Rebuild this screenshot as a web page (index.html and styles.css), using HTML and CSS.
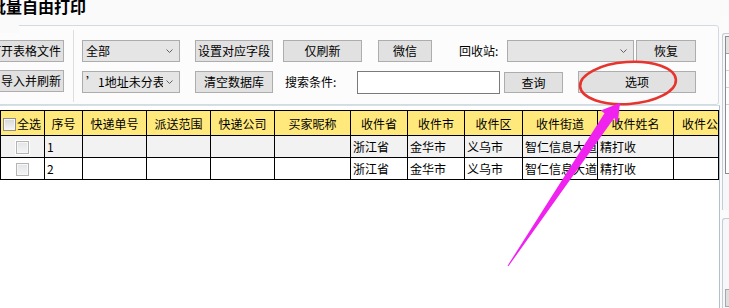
FILE: index.html
```html
<!DOCTYPE html>
<html lang="zh-CN">
  <head>
    <meta charset="UTF-8" />
    <title>批量自由打印</title>
    <link rel="stylesheet" href="styles.css">
  </head>
  <body>
    <div class="page">
      <div class="title">批量自由打印</div>
      <div class="body">
        <div class="main">
          <div class="group">
            <span class="caption">设置</span>
            <div class="left-col">
              <button class="btn btn-wide">打开表格文件</button>
              <button class="btn btn-wide">导入并刷新</button>
            </div>
            <div class="vsep"></div>
            <div class="rows">
              <div class="row">
                <div class="combo combo-main">
                  <span class="combo-text">全部</span>
                  <svg class="chev" width="7" height="4" viewBox="0 0 7 4"><polyline points="0.5,0.5 3.5,3.5 6.5,0.5" /></svg>
                </div>
                <button class="btn btn-field">设置对应字段</button>
                <button class="btn btn-refresh">仅刷新</button>
                <button class="btn btn-wx">微信</button>
                <span class="lbl lbl-bin">回收站:</span>
                <div class="combo combo-bin">
                  <span class="combo-text"></span>
                  <svg class="chev" width="7" height="4" viewBox="0 0 7 4"><polyline points="0.5,0.5 3.5,3.5 6.5,0.5" /></svg>
                </div>
                <button class="btn btn-restore">恢复</button>
              </div>
              <div class="row">
                <div class="combo combo-main">
                  <span class="combo-text">’1地址未分表’</span>
                  <svg class="chev" width="7" height="4" viewBox="0 0 7 4"><polyline points="0.5,0.5 3.5,3.5 6.5,0.5" /></svg>
                </div>
                <button class="btn btn-field">清空数据库</button>
                <span class="lbl lbl-search">搜索条件:</span>
                <input class="search" type="text" />
                <button class="btn btn-query">查询</button>
                <button class="btn btn-option">选项</button>
              </div>
            </div>
          </div>

          <div class="grid-wrap">
            <table class="grid">
              <colgroup>
                <col style="width: 44px" />
                <col style="width: 38px" />
                <col style="width: 64px" />
                <col style="width: 64px" />
                <col style="width: 64px" />
                <col style="width: 76px" />
                <col style="width: 57px" />
                <col style="width: 57px" />
                <col style="width: 58px" />
                <col style="width: 75px" />
                <col style="width: 76px" />
                <col style="width: 45px" />
              </colgroup>
              <thead>
                <tr>
                  <th class="th-all"><span class="cb"></span>全选</th>
                  <th>序号</th>
                  <th>快递单号</th>
                  <th>派送范围</th>
                  <th>快递公司</th>
                  <th>买家昵称</th>
                  <th>收件省</th>
                  <th>收件市</th>
                  <th>收件区</th>
                  <th>收件街道</th>
                  <th>收件姓名</th>
                  <th class="th-cut">收件公司</th>
                </tr>
              </thead>
              <tbody>
                <tr class="odd">
                  <td class="td-cb"><span class="cb cb-row"></span></td>
                  <td>1</td>
                  <td></td>
                  <td></td>
                  <td></td>
                  <td></td>
                  <td>浙江省</td>
                  <td>金华市</td>
                  <td>义乌市</td>
                  <td>智仁信息大道</td>
                  <td>精打收</td>
                  <td></td>
                </tr>
                <tr>
                  <td class="td-cb"><span class="cb cb-row"></span></td>
                  <td>2</td>
                  <td></td>
                  <td></td>
                  <td></td>
                  <td></td>
                  <td>浙江省</td>
                  <td>金华市</td>
                  <td>义乌市</td>
                  <td>智仁信息大道</td>
                  <td>精打收</td>
                  <td></td>
                </tr>
              </tbody>
            </table>
          </div>
        </div>

        <div class="side">
          <div class="panel panel-top">
            <div class="mini-grid">
              <div class="mini-head"></div>
              <div class="mini-row"></div>
              <div class="mini-row"></div>
              <div class="mini-row"></div>
            </div>
          </div>
          <div class="panel panel-bottom">
            <div class="mini-btn"></div>
          </div>
        </div>
      </div>

      <!-- annotation drawn over the screenshot -->
      <svg class="mark" width="729" height="308" viewBox="0 0 729 308">
        <ellipse cx="628" cy="83" rx="48" ry="21" transform="rotate(-4 628 83)" fill="none" stroke="#e8342f" stroke-width="2.6" />
        <polygon fill="#ef22ef" points="507.6,265.7 604.5,113.2 600.6,110.4 620,103 617.8,122.8 614.2,117.9 508.4,266.3" />
      </svg>
    </div>
  </body>
</html>
```

FILE: styles.css
```css
* {
  box-sizing: border-box;
}

body {
  margin: 0;
  font-family: "Noto Sans CJK SC", "Noto Sans", sans-serif;
  font-size: 12px;
  color: #000;
}

.page {
  position: relative;
  width: 729px;
  height: 308px;
  overflow: hidden;
  background: #fafafa;
  display: flex;
  flex-direction: column;
}

.title {
  height: 20px;
  margin-top: -4px;
  margin-left: -10px;
  font-size: 16px;
  font-weight: bold;
  line-height: 20px;
}

.body {
  flex: 1;
  display: flex;
}

.main {
  width: 720px;
  display: flex;
  flex-direction: column;
}

/* settings group */
.group {
  position: relative;
  margin-top: 9px;
  margin-left: -20px;
  width: 739px;
  height: 80px;
  border: 1px solid #d3dbe2;
  border-radius: 3px;
  background: #fcfcfc;
  display: flex;
  padding: 14px 0 0 5px;
}

.caption {
  position: absolute;
  left: -7px;
  top: -9px;
  padding-right: 21px;
  line-height: 16px;
  background: #fafafa;
}

.left-col {
  width: 78px;
  display: flex;
  flex-direction: column;
  gap: 8px;
}

.vsep {
  width: 1px;
  background: #dedede;
  margin: -10px 0 2px 9px;
}

.rows {
  margin-left: 8px;
  display: flex;
  flex-direction: column;
  gap: 9px;
}

.row {
  display: flex;
  align-items: center;
  height: 22px;
}

.btn {
  height: 22px;
  padding: 0;
  border: 1px solid #adadad;
  background: #e1e1e1;
  font-family: inherit;
  font-size: 12px;
  line-height: 20px;
  color: #000;
  white-space: nowrap;
  overflow: hidden;
}

.btn-wide {
  width: 78px;
  text-align: right;
  padding-right: 2px;
}

.btn-field {
  width: 78px;
  margin-left: 15px;
}

.btn-refresh {
  width: 79px;
  margin-left: 10px;
}

.btn-wx {
  width: 54px;
  margin-left: 16px;
}

.btn-restore {
  width: 60px;
  margin-left: 2px;
}

.btn-query {
  width: 59px;
  height: 21px;
  margin-left: 4px;
}

.btn-option {
  width: 118px;
  margin-left: 15px;
}

.combo {
  height: 22px;
  border: 1px solid #acacac;
  background: #e5e5e5;
  display: flex;
  align-items: center;
  padding-left: 3px;
  padding-right: 6px;
}

.combo-main {
  width: 98px;
}

.combo-bin {
  width: 127px;
  padding-right: 6px;
}

.combo-text {
  flex: 1;
  white-space: nowrap;
  overflow: hidden;
  line-height: 20px;
}

.chev {
  flex: none;
  margin-left: 3px;
}

.chev polyline {
  fill: none;
  stroke: #606060;
  stroke-width: 1;
}

.lbl {
  white-space: nowrap;
  line-height: 20px;
}

.lbl-bin {
  width: 48px;
  margin-left: 27px;
}

.lbl-search {
  width: 72px;
  margin-left: 12px;
}

.search {
  width: 143px;
  height: 23px;
  border: 1px solid #7a7a7a;
  background: #fff;
  padding: 0;
  margin: 0;
}

/* data grid */
.grid-wrap {
  flex: 1;
  border-top: 1px solid #d6dee7;
  border-right: 1px solid #b2c0ce;
  padding-top: 4px;
  background: #fff;
}

.grid {
  width: 718px;
  border-collapse: collapse;
  table-layout: fixed;
}

.grid th,
.grid td {
  border: 1px solid #000;
  padding: 0 2px;
  white-space: nowrap;
  overflow: hidden;
  font-weight: normal;
}

.grid th {
  height: 25px;
  background: #ffe97d;
  text-align: center;
}

.grid td {
  height: 22px;
  text-align: left;
}

.grid tr.odd td {
  background: #f2f2f2;
}

.grid th.th-all {
  padding: 0 0 0 2px;
  text-align: left;
}

.grid th.th-cut {
  text-align: left;
  padding-left: 8px;
}

.grid td.td-cb {
  text-align: center;
  padding: 0;
}

.cb {
  display: inline-block;
  width: 13px;
  height: 13px;
  border: 1px solid #8f8f8f;
  background: linear-gradient(#d6d6d6, #f6f6f6);
  box-shadow: inset 0 0 0 1px #f4f4f4;
  vertical-align: -2px;
  margin-right: 1px;
}

.cb-row {
  border-color: #b4b4b4;
  box-shadow: 0 0 0 1px #fff, inset 0 0 0 1px #f7f7f7;
  background: linear-gradient(#e2e4e6, #f4f5f6);
  margin: 0;
}

/* right side strip */
.side {
  flex: 1;
  padding-left: 2px;
  display: flex;
  flex-direction: column;
  gap: 8px;
  background: #fbfbfb;
}

.panel {
  border-left: 1px solid #c4ccd5;
  border-top: 1px solid #c4ccd5;
  border-top-left-radius: 3px;
  background: #f5f7f9;
  padding-left: 2px;
}

.panel-top {
  margin-top: 17px;
  height: 177px;
  padding-top: 2px;
}

.panel-bottom {
  flex: 1;
  display: flex;
  flex-direction: column;
  justify-content: flex-end;
}

.mini-grid {
  height: 138px;
  border: 1px solid #8c8c8c;
  border-right: none;
  background: #fff;
}

.mini-head {
  height: 17px;
  background: #e2e2e2;
  border-bottom: 1px solid #a0a0a0;
}

.mini-row {
  height: 17px;
  border-bottom: 1px solid #d0d0d0;
}

.mini-btn {
  height: 18px;
  margin-bottom: 1px;
  border: 1px solid #a8a8a8;
  border-right: none;
  background: #dedede;
}

.mark {
  position: absolute;
  left: 0;
  top: 0;
  pointer-events: none;
}
```
